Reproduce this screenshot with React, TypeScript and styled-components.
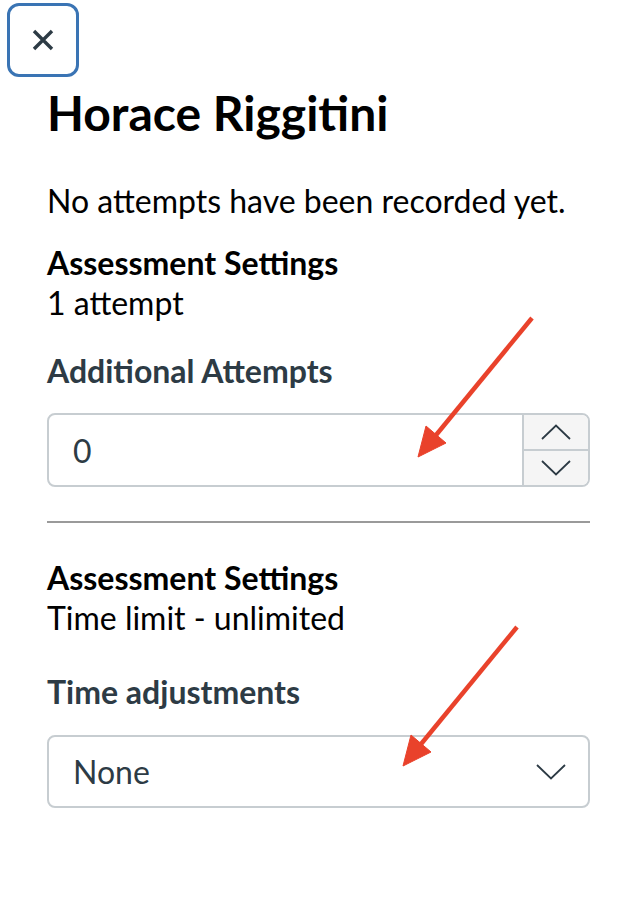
import styled, { createGlobalStyle } from "styled-components";

const GlobalStyle = createGlobalStyle`
  html, body {
    margin: 0;
    padding: 0;
    background: #ffffff;
  }
  body {
    font-family: Lato, "Noto Sans", sans-serif;
    color: #000000;
  }
`;

const Page = styled.div`
  position: relative;
  width: 636px;
  min-height: 914px;
  padding: 3px 0 0 7px;
  box-sizing: border-box;
`;

const CloseButton = styled.button`
  width: 72px;
  height: 74px;
  display: flex;
  align-items: center;
  justify-content: center;
  padding: 0;
  background: #ffffff;
  border: 3px solid #3a74b4;
  border-radius: 12px;
  color: #2d3b45;
  cursor: pointer;
`;

const Content = styled.div`
  padding: 0 46px 0 40px;
  display: flex;
  flex-direction: column;
`;

const Title = styled.h1`
  margin: 8px 0 0;
  font-size: 48px;
  line-height: 56px;
  font-weight: 700;
  color: #000000;
`;

const Text = styled.p<{ $top?: number }>`
  margin: ${({ $top }) => $top ?? 0}px 0 0;
  font-size: 32px;
  line-height: 40px;
  color: #000000;
`;

const SettingsTitle = styled.p<{ $top: number }>`
  margin: ${({ $top }) => $top}px 0 0;
  font-size: 32px;
  line-height: 40px;
  font-weight: 700;
  color: #000000;
`;

const FieldLabel = styled.label<{ $top: number; $bottom: number }>`
  display: block;
  margin: ${({ $top, $bottom }) => `${$top}px 0 ${$bottom}px`};
  font-size: 32px;
  line-height: 40px;
  font-weight: 700;
  color: #2d3b45;
`;

const Field = styled.div<{ $height: number }>`
  display: flex;
  height: ${({ $height }) => $height}px;
  box-sizing: border-box;
  border: 2px solid #c7cdd1;
  border-radius: 8px;
  overflow: hidden;
  background: #ffffff;
`;

const FieldValue = styled.div`
  flex: 1;
  display: flex;
  align-items: center;
  padding: 0 24px;
  font-size: 32px;
  color: #2d3b45;
`;

const Spinner = styled.div`
  width: 64px;
  display: flex;
  flex-direction: column;
  border-left: 2px solid #c7cdd1;
  background: #f5f5f5;
`;

const SpinButton = styled.div<{ $divided?: boolean }>`
  flex: 1;
  display: flex;
  align-items: center;
  justify-content: center;
  border-top: ${({ $divided }) => ($divided ? "2px solid #c7cdd1" : "none")};
`;

const SelectArrow = styled.div`
  width: 74px;
  display: flex;
  align-items: center;
  justify-content: center;
`;

const Divider = styled.hr`
  margin: 34px 0 0;
  border: none;
  border-top: 2px solid #9a9a9a;
  height: 0;
`;

const Overlay = styled.svg`
  position: absolute;
  top: 0;
  left: 0;
  pointer-events: none;
`;

function Chevron({ up }: { up?: boolean }) {
  return (
    <svg width="30" height="16" viewBox="0 0 30 16" fill="none">
      <path
        d={up ? "M1 15 L15 1.5 L29 15" : "M1 1 L15 14.5 L29 1"}
        stroke="#2d3b45"
        strokeWidth="1.8"
      />
    </svg>
  );
}

function Arrow({ dx, dy }: { dx: number; dy: number }) {
  return (
    <g transform={`translate(${dx} ${dy})`} fill="#e9422b" stroke="#e9422b">
      <line x1="532" y1="318" x2="432" y2="440" strokeWidth="4.5" />
      <polygon points="418,457 426,426 446,443" strokeWidth="1" />
    </g>
  );
}

export default function App() {
  return (
    <>
      <GlobalStyle />
      <Page>
        <CloseButton aria-label="Close">
          <svg width="22" height="22" viewBox="0 0 22 22">
            <path d="M2 2 L20 20 M20 2 L2 20" stroke="#2d3b45" strokeWidth="3.4" />
          </svg>
        </CloseButton>
        <Content>
          <Title>Horace Riggitini</Title>
          <Text $top={40}>No attempts have been recorded yet.</Text>
          <SettingsTitle $top={22}>Assessment Settings</SettingsTitle>
          <Text>1 attempt</Text>
          <FieldLabel $top={28} $bottom={22}>
            Additional Attempts
          </FieldLabel>
          <Field $height={74}>
            <FieldValue>0</FieldValue>
            <Spinner>
              <SpinButton>
                <Chevron up />
              </SpinButton>
              <SpinButton $divided>
                <Chevron />
              </SpinButton>
            </Spinner>
          </Field>
          <Divider />
          <SettingsTitle $top={35}>Assessment Settings</SettingsTitle>
          <Text>Time limit - unlimited</Text>
          <FieldLabel $top={34} $bottom={23}>
            Time adjustments
          </FieldLabel>
          <Field $height={73}>
            <FieldValue>None</FieldValue>
            <SelectArrow>
              <Chevron />
            </SelectArrow>
          </Field>
        </Content>
        <Overlay width="636" height="914" viewBox="0 0 636 914">
          <Arrow dx={0} dy={0} />
          <Arrow dx={-15} dy={309} />
        </Overlay>
      </Page>
    </>
  );
}
